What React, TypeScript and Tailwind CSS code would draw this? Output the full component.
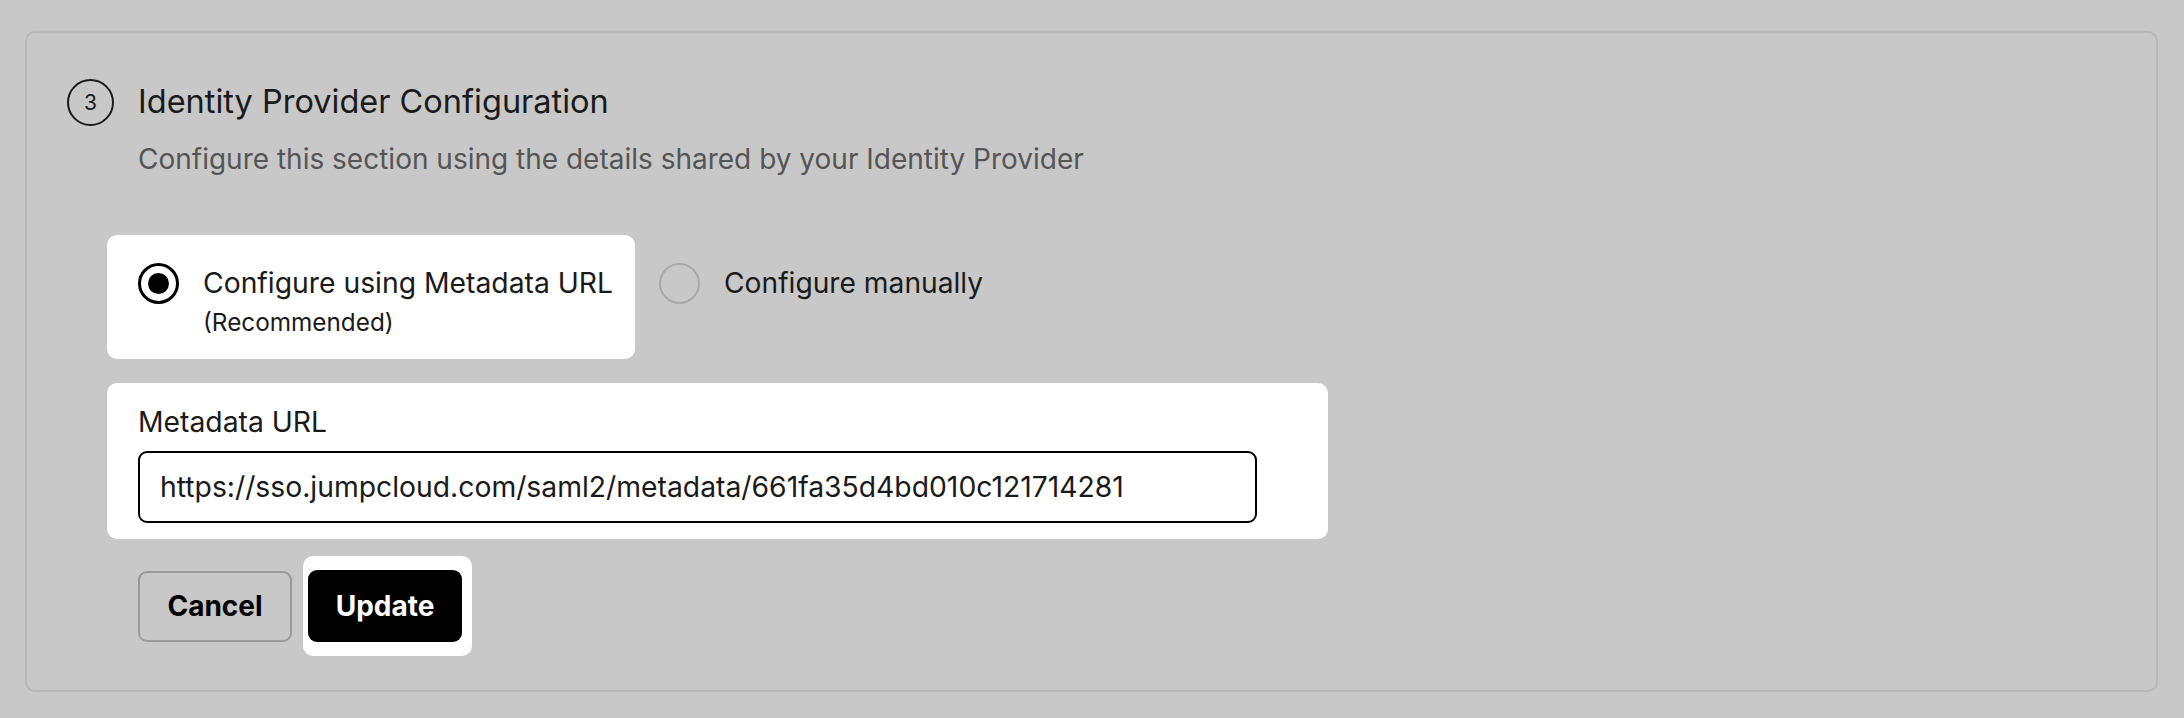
import React from "react";

export default function App() {
  return (
    <div
      className="w-[2184px] h-[718px] bg-[#c8c8c8] pt-[31px] pl-[25px] pr-[26px]"
      style={{ fontFamily: "Inter, 'Noto Sans', sans-serif" }}
    >
      <div className="h-[661px] rounded-[10px] border-2 border-[#b8b8b8] relative">
        <div className="flex items-center pl-[40px] pt-[46px]">
          <div className="w-[47px] h-[47px] rounded-full border-2 border-[#1a1a1a] flex items-center justify-center text-[21px] text-[#1a1a1a]">
            3
          </div>
          <div className="ml-[24px] text-[32.5px] text-[#1a1a1a] leading-none">
            Identity Provider Configuration
          </div>
        </div>
        <div className="pl-[111px] mt-[19px] text-[28px] text-[#555555] leading-none">
          Configure this section using the details shared by your Identity Provider
        </div>

        <div className="flex mt-[62px] ml-[80px]">
          <div className="w-[528px] h-[124px] bg-white rounded-[10px] flex items-start pl-[31px] pt-[28px]">
            <div className="w-[41px] h-[41px] rounded-full border-[3px] border-black flex items-center justify-center shrink-0">
              <div className="w-[21px] h-[21px] rounded-full bg-black" />
            </div>
            <div className="ml-[24px] flex flex-col">
              <span className="text-[28.3px] text-[#1a1a1a] leading-[38px] mt-[1px]">
                Configure using Metadata URL
              </span>
              <span className="text-[24.3px] text-[#1a1a1a] leading-[40px]">(Recommended)</span>
            </div>
          </div>
          <div className="flex items-start pt-[28px] ml-[24px]">
            <div className="w-[41px] h-[41px] rounded-full border-2 border-[#a8a8a8] shrink-0" />
            <span className="ml-[24px] text-[28.2px] text-[#1a1a1a] leading-[38px] mt-[1px]">
              Configure manually
            </span>
          </div>
        </div>

        <div className="ml-[80px] mt-[24px] w-[1221px] h-[156px] bg-white rounded-[10px] pl-[31px] pt-[20px]">
          <div className="text-[28.3px] text-[#1a1a1a] leading-[38px]">Metadata URL</div>
          <div className="mt-[10px] w-[1119px] h-[72px] border-2 border-black rounded-[9px] flex items-center pl-[20px] text-[28.3px] text-[#1a1a1a]">
            https://sso.jumpcloud.com/saml2/metadata/661fa35d4bd010c121714281
          </div>
        </div>

        <div className="flex items-center ml-[111px] mt-[17px]">
          <button className="w-[154px] h-[71px] rounded-[9px] border-2 border-[#999999] text-[28px] font-bold text-black">
            Cancel
          </button>
          <div className="ml-[11px] bg-white rounded-[10px] pl-[5px] pr-[10px] py-[14px]">
            <button className="w-[154px] h-[72px] rounded-[9px] bg-black text-[28px] font-bold text-white">
              Update
            </button>
          </div>
        </div>
      </div>
    </div>
  );
}
